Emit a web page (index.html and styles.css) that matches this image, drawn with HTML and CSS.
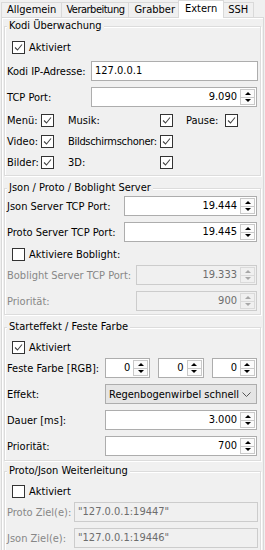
FILE: index.html
```html
<!DOCTYPE html>
<html lang="de">
<head>
  <meta charset="UTF-8">
  <title>Extern</title>
  <link rel="stylesheet" href="styles.css">
</head>
<body>

  <div class="tabs">
    <span class="tab">Allgemein</span>
    <span class="tab narrow">Verarbeitung</span>
    <span class="tab">Grabber</span>
    <span class="tab active">Extern</span>
    <span class="tab">SSH</span>
  </div>

  <div class="pane">

    <div class="group g1">
      <div class="group-title">Kodi Überwachung</div>
      <div class="check-row">
        <span class="cb"><svg viewBox="0 0 11 11"><path d="M2 5.5 4.5 8 9 2.5"/></svg></span>
        <span>Aktiviert</span>
      </div>
      <div class="row">
        <span class="lbl">Kodi IP-Adresse:</span>
        <span class="edit">127.0.0.1</span>
      </div>
      <div class="row">
        <span class="lbl">TCP Port:</span>
        <span class="spin"><span class="val">9.090</span><span class="btns"><i class="up"></i><i class="down"></i></span></span>
      </div>
      <div class="cb-grid">
        <span>Menü:</span>
        <span class="cb"><svg viewBox="0 0 11 11"><path d="M2 5.5 4.5 8 9 2.5"/></svg></span>
        <span>Musik:</span>
        <span class="cb"><svg viewBox="0 0 11 11"><path d="M2 5.5 4.5 8 9 2.5"/></svg></span>
        <span>Pause:</span>
        <span class="cb"><svg viewBox="0 0 11 11"><path d="M2 5.5 4.5 8 9 2.5"/></svg></span>

        <span>Video:</span>
        <span class="cb"><svg viewBox="0 0 11 11"><path d="M2 5.5 4.5 8 9 2.5"/></svg></span>
        <span class="tight">Bildschirmschoner:</span>
        <span class="cb"><svg viewBox="0 0 11 11"><path d="M2 5.5 4.5 8 9 2.5"/></svg></span>
        <span></span>
        <span></span>

        <span>Bilder:</span>
        <span class="cb"><svg viewBox="0 0 11 11"><path d="M2 5.5 4.5 8 9 2.5"/></svg></span>
        <span>3D:</span>
        <span class="cb"><svg viewBox="0 0 11 11"><path d="M2 5.5 4.5 8 9 2.5"/></svg></span>
      </div>
    </div>

    <div class="group g2">
      <div class="group-title">Json / Proto / Boblight Server</div>
      <div class="row first">
        <span class="lbl">Json Server TCP Port:</span>
        <span class="spin"><span class="val">19.444</span><span class="btns"><i class="up"></i><i class="down"></i></span></span>
      </div>
      <div class="row">
        <span class="lbl">Proto Server TCP Port:</span>
        <span class="spin"><span class="val">19.445</span><span class="btns"><i class="up"></i><i class="down"></i></span></span>
      </div>
      <div class="check-row">
        <span class="cb"></span>
        <span>Aktiviere Boblight:</span>
      </div>
      <div class="row disabled">
        <span class="lbl wide">Boblight Server TCP Port:</span>
        <span class="spin"><span class="val">19.333</span><span class="btns"><i class="up"></i><i class="down"></i></span></span>
      </div>
      <div class="row disabled">
        <span class="lbl wide">Priorität:</span>
        <span class="spin"><span class="val">900</span><span class="btns"><i class="up"></i><i class="down"></i></span></span>
      </div>
    </div>

    <div class="group g3">
      <div class="group-title">Starteffekt / Feste Farbe</div>
      <div class="check-row">
        <span class="cb"><svg viewBox="0 0 11 11"><path d="M2 5.5 4.5 8 9 2.5"/></svg></span>
        <span>Aktiviert</span>
      </div>
      <div class="row">
        <span class="lbl">Feste Farbe [RGB]:</span>
        <div class="rgb">
          <span class="spin"><span class="val">0</span><span class="btns"><i class="up"></i><i class="down"></i></span></span>
          <span class="spin"><span class="val">0</span><span class="btns"><i class="up"></i><i class="down"></i></span></span>
          <span class="spin"><span class="val">0</span><span class="btns"><i class="up"></i><i class="down"></i></span></span>
        </div>
      </div>
      <div class="row">
        <span class="lbl">Effekt:</span>
        <span class="combo">
          <span class="combo-text">Regenbogenwirbel schnell</span>
          <svg class="chevron" viewBox="0 0 9 5"><path d="M0.5 0.5 4.5 4.5 8.5 0.5"/></svg>
        </span>
      </div>
      <div class="row">
        <span class="lbl">Dauer [ms]:</span>
        <span class="spin"><span class="val">3.000</span><span class="btns"><i class="up"></i><i class="down"></i></span></span>
      </div>
      <div class="row">
        <span class="lbl">Priorität:</span>
        <span class="spin"><span class="val">700</span><span class="btns"><i class="up"></i><i class="down"></i></span></span>
      </div>
    </div>

    <div class="group g4">
      <div class="group-title">Proto/Json Weiterleitung</div>
      <div class="check-row">
        <span class="cb"></span>
        <span>Aktiviert</span>
      </div>
      <div class="row disabled">
        <span class="lbl">Proto Ziel(e):</span>
        <span class="edit">"127.0.0.1:19447"</span>
      </div>
      <div class="row disabled">
        <span class="lbl">Json Ziel(e):</span>
        <span class="edit">"127.0.0.1:19446"</span>
      </div>
    </div>

  </div>

</body>
</html>
```

FILE: styles.css
```css
    body {
      font-family: "DejaVu Sans Condensed", "Liberation Sans", sans-serif;
      font-size: 11px;
      margin: 0;
      width: 265px;
      height: 550px;
      overflow: hidden;
      background: #f0f0f0;
      color: #000;
    }
    .tabs {
      display: flex;
      align-items: flex-end;
      height: 17px;
      padding-left: 1px;
      position: relative;
      z-index: 1;
    }
    .tab {
      box-sizing: border-box;
      height: 15px;
      line-height: 13px;
      padding: 0 5px;
      border: 1px solid #d9d9d9;
      border-bottom: none;
      margin-right: -1px;
      background: #f0f0f0;
    }
    .tab.narrow {
      padding: 0 4px;
      letter-spacing: -0.5px;
    }
    .tab.active {
      height: 18px;
      line-height: 15px;
      margin: 0 -2px -1px -2px;
      padding: 0 6px;
      background: #fff;
      position: relative;
    }
    .pane {
      box-sizing: border-box;
      height: 540px;
      margin: 0 1px;
      padding: 0 2px;
      border: 1px solid #d9d9d9;
      box-shadow: inset 1px 1px 0 #fff;
    }
    .group {
      border: 1px solid #dcdcdc;
      box-shadow: inset 1px 1px 0 #fff, 1px 1px 0 #fff;
      padding: 0 2px;
    }
    .group-title {
      width: fit-content;
      margin-top: -8px;
      padding: 0 2px;
      line-height: 14px;
      background: #f0f0f0;
    }
    .g1 { margin-top: 8px; padding-bottom: 2px; }
    .g2 { margin-top: 12px; padding-bottom: 3px; }
    .g3 { margin-top: 12px; padding-bottom: 4px; }
    .g4 { margin-top: 10px; padding-bottom: 6px; }

    .row {
      display: flex;
      align-items: center;
      height: 20px;
      margin-top: 6px;
    }
    .row.first { margin-top: 1px; }
    .lbl {
      flex: none;
      white-space: nowrap;
    }
    .g1 .lbl { width: 84px; }
    .g2 .lbl { width: 117px; }
    .g2 .lbl.wide { width: 129px; }
    .g3 .lbl { width: 98px; }
    .g4 .lbl { width: 67px; }

    .check-row {
      display: flex;
      align-items: center;
      gap: 4px;
      height: 20px;
      margin-top: 3px;
      padding-left: 5px;
    }
    .check-row + .row { margin-top: 1px; }
    .row + .check-row { margin-top: 2px; }
    .g1 .check-row { margin-top: 4px; }
    .g1 .check-row + .row { margin-top: 4px; }

    .cb {
      box-sizing: border-box;
      display: inline-flex;
      width: 13px;
      height: 13px;
      border: 1px solid #333;
      background: #fff;
    }
    .cb svg {
      width: 11px;
      height: 11px;
      fill: none;
      stroke: #444;
      stroke-width: 1.1;
    }
    .cb-grid {
      display: grid;
      grid-template-columns: 34px 27px 92px 26px 39px 13px;
      grid-auto-rows: 21px;
      align-items: center;
      margin-top: 3px;
      white-space: nowrap;
    }
    .cb-grid .tight { letter-spacing: -0.3px; }

    .edit {
      flex: 1;
      box-sizing: border-box;
      height: 20px;
      line-height: 18px;
      padding-left: 3px;
      border: 1px solid #adadad;
      background: #fff;
    }
    .spin {
      flex: 1;
      display: flex;
      box-sizing: border-box;
      height: 20px;
      margin-right: 1px;
      border: 1px solid #adadad;
      background: #fff;
    }
    .spin .val {
      flex: 1;
      text-align: right;
      line-height: 18px;
      padding-right: 3px;
    }
    .btns {
      display: flex;
      flex-direction: column;
      width: 15px;
      padding: 1px 1px 1px 0;
    }
    .btns i {
      flex: 1;
      display: flex;
      align-items: center;
      justify-content: center;
      border: 1px solid #c9c9c9;
      background: #fbfbfb;
    }
    .btns i + i { border-top: none; }
    .btns .up::after {
      content: "";
      border-left: 3px solid transparent;
      border-right: 3px solid transparent;
      border-bottom: 3px solid #000;
    }
    .btns .down::after {
      content: "";
      border-left: 3px solid transparent;
      border-right: 3px solid transparent;
      border-top: 3px solid #000;
    }

    .disabled { color: #878787; }
    .disabled .spin,
    .disabled .edit {
      background: #f0f0f0;
      border-color: #cccccc;
      color: #6d6d6d;
    }
    .disabled .btns i {
      background: #f0f0f0;
      border-color: #dadada;
    }
    .disabled .btns .up::after { border-bottom-color: #a8a8a8; }
    .disabled .btns .down::after { border-top-color: #a8a8a8; }

    .rgb {
      flex: 1;
      display: flex;
      gap: 8px;
    }
    .rgb .spin { margin-right: 0; }
    .rgb .spin:last-child { margin-right: 1px; }

    .combo {
      flex: 1;
      display: flex;
      align-items: center;
      box-sizing: border-box;
      height: 20px;
      margin-right: 1px;
      padding-left: 3px;
      border: 1px solid #adadad;
      background: #e5e5e5;
    }
    .combo-text { flex: 1; }
    .chevron {
      width: 9px;
      height: 5px;
      margin-right: 5px;
      fill: none;
      stroke: #555;
    }
```
